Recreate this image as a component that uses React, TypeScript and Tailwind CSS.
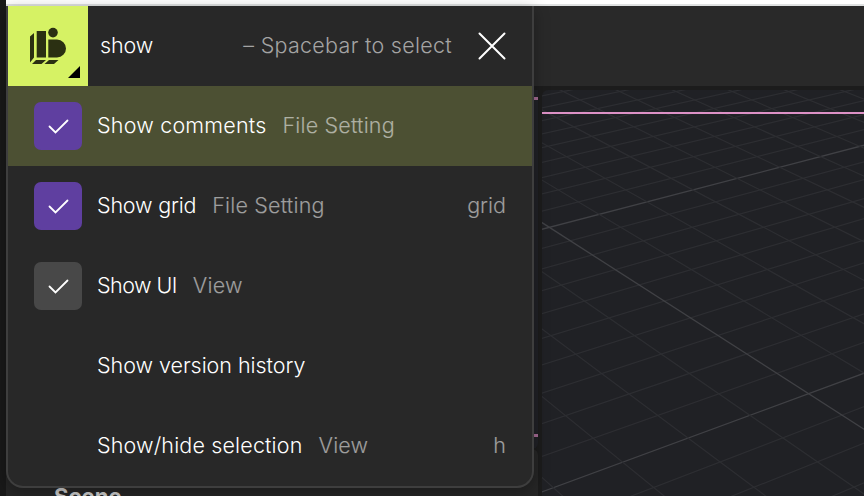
import type { ReactNode } from "react";

const mapPoint = (i: number, j: number) => {
  const w = 1 + 0.020869 * i - 0.020448 * j;
  const u = (28 + 153.177 * i + 61.319 * j) / w;
  const v = (442 - 30.561 * i + 30.658 * j) / w;
  return [u / 3 - 2, v / 3 - 10];
};

const range = (a: number, b: number) => Array.from({ length: b - a + 1 }, (_, n) => a + n);

function PerspectiveGrid() {
  const seg = (a: number[], b: number[], key: string, major: boolean) => (
    <line key={key} x1={a[0]} y1={a[1]} x2={b[0]} y2={b[1]} stroke={major ? "#404145" : "#2d2e32"} strokeWidth={major ? 1.3 : 1.2} />
  );
  return (
    <svg className="block h-full w-full" viewBox="0 0 322 406">
      {range(-28, 16).map((j) => seg(mapPoint(-13, j), mapPoint(40, j), `j${j}`, j === 0 || j === 10))}
      {range(-12, 30).map((i) => seg(mapPoint(i, -36), mapPoint(i, 18), `i${i}`, i === 0))}
      <line x1="0" x2="322" y1="23" y2="23" stroke="#dd91c6" strokeWidth="2" />
    </svg>
  );
}

function Logo() {
  return (
    <svg className="h-20 w-20" viewBox="0 0 80 80" fill="#2b3012">
      <path d="M22 30.500l4-3.500v24.500l-4 5zM28.700 25H38v26.500h-9.300z" />
      <circle cx="45" cy="26.600" r="4.800" />
      <path d="M40.300 33.500H49a9 9 0 0 1 0 18h-8.700zM28 54h10l-4.500 4H24zM41 54h9.500l-4.500 4h-9.500z" />
      <path d="M72 60v12H60z" fill="#000" />
    </svg>
  );
}

type Item = { label: ReactNode; track: string; group?: string; hint?: string; check?: string };

const items: Item[] = [
  { label: "Show comments", track: "tracking-[0.200px]", group: "File Setting", check: "bg-[#5f3fa0]" },
  { label: "Show grid", track: "tracking-[-0.200px]", group: "File Setting", hint: "grid", check: "bg-[#5f3fa0]" },
  { label: "Show UI", track: "tracking-[-0.550px]", group: "View", check: "bg-[#484848]" },
  { label: "Show version history", track: "tracking-[-0.040px]" },
  { label: "Show/hide selection", track: "tracking-[0.150px]", group: "View", hint: "h" },
];

function CommandMenu() {
  return (
    <div className="absolute left-[6px] top-[6px] h-[482px] w-[528px] overflow-hidden rounded-b-[17px] border-2 border-t-0 border-[#3e3e3e] bg-[#282828] text-[21.500px] leading-7 shadow-[0_4px_16px_rgba(0,0,0,0.3)]">
      <div className="flex h-20 items-center">
        <div className="h-20 w-20 bg-[#d6f264]"><Logo /></div>
        <div className="ml-3 flex-1 pb-0.5 tracking-[-0.100px]">show</div>
        <div className="mr-[26px] pb-0.5 tracking-[0.280px] text-[#a4a4a4]">– Spacebar to select</div>
        <svg className="mr-[26px] h-7 w-7" viewBox="0 0 28 28" stroke="#fff" strokeWidth="2" strokeLinecap="round">
          <path d="M1.500 1.500l25 25M26.500 1.500l-25 25" />
        </svg>
      </div>
      {items.map((it, n) => (
        <div key={n} className={`flex h-20 items-center px-[26px] ${n === 0 ? "bg-[#4c5033]" : ""}`}>
          <div className={`mr-[15px] flex h-12 w-12 items-center justify-center rounded-[7px] ${it.check ?? ""}`}>
            {it.check && (
              <svg className="h-6 w-6" viewBox="0 0 24 24" fill="none" stroke="#fff" strokeWidth="1.800" strokeLinecap="round">
                <path d="M3.500 12.500l6 6L21.500 6.500" />
              </svg>
            )}
          </div>
          <span className={`pb-0.5 font-[350] ${it.track}`}>{it.label}</span>
          <span className="ml-4 pb-0.5 tracking-[0.180px] text-white/55">{it.group}</span>
          <span className="ml-auto pb-0.5 text-white/55">{it.hint}</span>
        </div>
      ))}
    </div>
  );
}

export default function App() {
  return (
    <div className="relative flex h-[496px] w-[864px] overflow-hidden bg-[#1c1c1c] font-['Inter',sans-serif] font-light text-white">
      <div className="w-[6px] bg-[#191919]" />
      <div className="flex flex-1 flex-col">
        <div className="h-[6px] border-b-2 border-[#dfe1e1] bg-white" />
        <div className="h-20 bg-[#292929]" />
        <div className="flex h-[410px] gap-1 pt-1">
          <div className="flex w-[532px] flex-col">
            <div className="h-[359px] rounded-b-[6px] bg-[#202126] pt-[7px]">
              <div className="h-[3px] bg-[#a46b93]" />
              <div className="mt-[334px] h-[3px] bg-[#a46b93]" />
            </div>
            <div className="h-[47px] rounded-t-[6px] bg-[#262626] pl-12 pt-[33px] text-[22px] font-bold leading-7 tracking-[0.100px] text-[#cdcdcd]">Scene</div>
          </div>
          <div className="h-[406px] w-[322px] overflow-hidden rounded-tl-[6px] bg-[#202125]"><PerspectiveGrid /></div>
        </div>
      </div>
      <CommandMenu />
    </div>
  );
}
